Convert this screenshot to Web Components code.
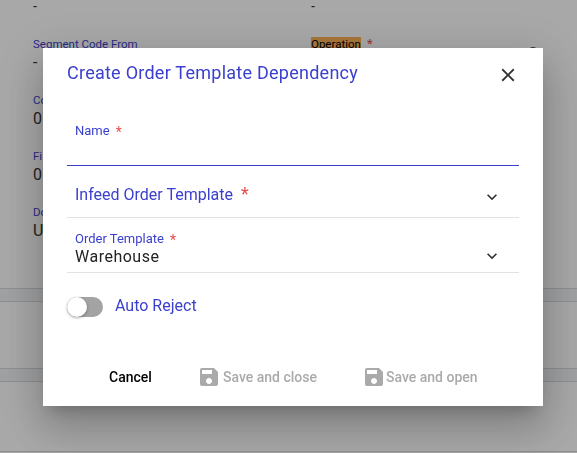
<!DOCTYPE html>
<html>
<head>
<meta charset="utf-8">
<style>
  html, body { margin: 0; padding: 0; height: 100%; overflow: hidden; font-family: Roboto, sans-serif; }
</style>
</head>
<body>
<order-page>
  <detail-field slot="left" label="-" plain></detail-field>
  <detail-field slot="right" label="-" plain></detail-field>
  <detail-field slot="left" label="Segment Code From" value="-"></detail-field>
  <detail-field slot="right" label="Operation" marked></detail-field>
  <detail-field slot="left" label="Co" value="0"></detail-field>
  <detail-field slot="left" label="Fi" value="0"></detail-field>
  <detail-field slot="left" label="Do" value="U"></detail-field>
</order-page>
<modal-dialog heading="Create Order Template Dependency">
  <text-field label="Name"></text-field>
  <select-field label="Infeed Order Template" big></select-field>
  <select-field label="Order Template" value="Warehouse"></select-field>
  <toggle-field label="Auto Reject"></toggle-field>
  <action-button slot="actions" label="Cancel" style="width:93px"></action-button>
  <action-button slot="actions" label="Save and close" icon disabled style="margin-left:20px"></action-button>
  <action-button slot="actions" label="Save and open" icon disabled tight style="margin-left:45px"></action-button>
</modal-dialog>

<script>
(function () {
  const BLUE = '#3a3fce';
  const RED = '#e84c4c';
  const saveIcon = `<svg width="24" height="24" viewBox="0 0 24 24" fill="currentColor"><path d="M17 3H5c-1.11 0-2 .9-2 2v14c0 1.1.89 2 2 2h14c1.1 0 2-.9 2-2V7l-4-4zm-5 16c-1.66 0-3-1.34-3-3s1.34-3 3-3 3 1.34 3 3-1.34 3-3 3zm3-10H5V5h10v4z"/></svg>`;
  const chevron = `<svg width="20" height="20" viewBox="0 0 24 24" fill="#333"><path d="M7.41 8.59 12 13.17l4.59-4.58L18 10l-6 6-6-6z"/></svg>`;

  class OrderPage extends HTMLElement {
    constructor() {
      super();
      this.attachShadow({ mode: 'open' }).innerHTML = `
      <style>
        :host { display: block; position: relative; height: 453px; background: #fff; color: #333; overflow: hidden; }
        .cols { display: grid; grid-template-columns: 278px 1fr; padding: 0 0 0 33px; height: 288px; box-sizing: border-box; }
        .col { display: flex; flex-direction: column; gap: 18px; }
        .band { height: 12px; background: #f2f4f7; border-top: 1px solid #d8d8d8; border-bottom: 1px solid #d8d8d8; }
        .gap { height: 66px; }
        .end { height: 69px; border-bottom: 1px solid #d8d8d8; }
        .peek { position: absolute; left: 527px; top: 47px; width: 12px; height: 12px; border-radius: 50%; background: #444; }
      </style>
      <div class="cols">
        <div class="col"><slot name="left"></slot></div>
        <div class="col"><slot name="right"></slot></div>
      </div>
      <div class="band"></div>
      <div class="gap"></div>
      <div class="band"></div>
      <div class="end"></div>
      <div class="peek"></div>`;
    }
  }
  customElements.define('order-page', OrderPage);

  class DetailField extends HTMLElement {
    constructor() {
      super();
      this.attachShadow({ mode: 'open' });
    }
    connectedCallback() {
      const label = this.getAttribute('label');
      const value = this.getAttribute('value');
      if (this.hasAttribute('plain')) {
        this.shadowRoot.innerHTML = `
        <style>
          :host { display: block; height: 20px; }
          div { font-size: 12px; font-weight: 500; line-height: 14px; color: #333; }
        </style><div>${label}</div>`;
        return;
      }
      const name = this.hasAttribute('marked')
        ? `<span class="mark">${label}</span><span class="req">*</span>`
        : label;
      this.shadowRoot.innerHTML = `
      <style>
        :host { display: block; height: 38px; }
        .label { font-size: 11.5px; line-height: 12px; margin-bottom: 2px; color: ${BLUE}; white-space: nowrap; }
        .mark { background: #ffb45a; color: #000; }
        .req { color: ${RED}; margin-left: 6px; font-size: 13px; }
        .value { font-size: 16px; line-height: 22px; color: #333; letter-spacing: .3px; }
      </style>
      <div class="label">${name}</div>
      ${value ? `<div class="value">${value}</div>` : ''}`;
    }
  }
  customElements.define('detail-field', DetailField);

  class ModalDialog extends HTMLElement {
    constructor() {
      super();
      this.attachShadow({ mode: 'open' });
    }
    connectedCallback() {
      this.shadowRoot.innerHTML = `
      <style>
        :host { position: fixed; inset: 0; background: rgba(0,0,0,.34); }
        .box { position: absolute; left: 43px; top: 48px; width: 500px; height: 358px; box-sizing: border-box; background: #fff; padding: 0 24px; display: flex; flex-direction: column;
          box-shadow: 0 11px 15px -7px rgba(0,0,0,.2), 0 24px 38px 3px rgba(0,0,0,.14), 0 9px 46px 8px rgba(0,0,0,.12); }
        header { display: flex; justify-content: space-between; align-items: center; height: 50px; }
        h2 { margin: 0 0 2px; font-size: 18px; font-weight: 400; letter-spacing: .25px; color: ${BLUE}; }
        .close { display: flex; margin-top: 3px; }
        .body { flex: 1; }
        .actions { display: flex; align-items: center; height: 40px; margin: 0 0 9px 17px; }
      </style>
      <div class="box">
        <header>
          <h2>${this.getAttribute('heading')}</h2>
          <span class="close"><svg width="22" height="22" viewBox="0 0 24 24" fill="#333"><path d="M19 6.41 17.59 5 12 10.59 6.41 5 5 6.41 10.59 12 5 17.59 6.41 19 12 13.41 17.59 19 19 17.59 13.41 12z"/></svg></span>
        </header>
        <div class="body"><slot></slot></div>
        <div class="actions"><slot name="actions"></slot></div>
      </div>`;
    }
  }
  customElements.define('modal-dialog', ModalDialog);

  class TextField extends HTMLElement {
    constructor() {
      super();
      this.attachShadow({ mode: 'open' });
    }
    connectedCallback() {
      this.shadowRoot.innerHTML = `
      <style>
        :host { display: block; height: 68px; box-sizing: border-box; padding: 26px 8px 0; border-bottom: 1px solid #3a3fce; }
        label { display: block; font-size: 13px; line-height: 14px; color: ${BLUE}; }
        i { font-style: normal; font-size: 14px; line-height: 0; vertical-align: -2px; color: ${RED}; margin-left: 6px; }
      </style>
      <label>${this.getAttribute('label')}<i>*</i></label>`;
    }
  }
  customElements.define('text-field', TextField);

  class SelectField extends HTMLElement {
    constructor() {
      super();
      this.attachShadow({ mode: 'open' });
    }
    connectedCallback() {
      const big = this.hasAttribute('big');
      const value = this.getAttribute('value');
      this.shadowRoot.innerHTML = `
      <style>
        :host { display: flex; align-items: ${big ? 'center' : 'flex-start'}; justify-content: space-between; box-sizing: border-box; height: ${big ? 52 : 55}px; padding: ${big ? '6px' : '14px'} 17px 0 8px; border-bottom: 1px solid #e2e2e2; }
        .label { font-size: ${big ? 16 : 13}px; line-height: ${big ? 20 : 14}px; color: ${BLUE}; }
        i { font-style: normal; font-size: ${big ? 18 : 14}px; line-height: 0; vertical-align: ${big ? 0 : -2}px; color: ${RED}; margin-left: ${big ? 8 : 6}px; }
        .value { font-size: 16px; line-height: 19px; margin-top: 1px; letter-spacing: .5px; color: #222; }
        svg { display: block; margin-top: ${big ? 4 : 14}px; }
      </style>
      <div>
        <div class="label">${this.getAttribute('label')}<i>*</i></div>
        ${value ? `<div class="value">${value}</div>` : ''}
      </div>
      ${chevron}`;
    }
  }
  customElements.define('select-field', SelectField);

  class ToggleField extends HTMLElement {
    constructor() {
      super();
      this.attachShadow({ mode: 'open' });
    }
    connectedCallback() {
      this.shadowRoot.innerHTML = `
      <style>
        :host { display: flex; align-items: center; gap: 12px; margin-top: 23px; height: 22px; }
        .track { position: relative; width: 36px; height: 20px; border-radius: 10px; background: #a3a3a3; }
        .thumb { position: absolute; left: 0; top: 0; width: 20px; height: 20px; border-radius: 50%; background: #fff; box-shadow: 0 1px 3px rgba(0,0,0,.35); }
        span { font-size: 16px; color: ${BLUE}; padding-bottom: 4px; }
      </style>
      <div class="track"><div class="thumb"></div></div>
      <span>${this.getAttribute('label')}</span>`;
    }
  }
  customElements.define('toggle-field', ToggleField);

  class ActionButton extends HTMLElement {
    constructor() {
      super();
      this.attachShadow({ mode: 'open' });
    }
    connectedCallback() {
      const off = this.hasAttribute('disabled');
      this.shadowRoot.innerHTML = `
      <style>
        :host { display: inline-flex; align-items: center; justify-content: center; gap: ${this.hasAttribute('tight') ? 0 : 2}px; height: 36px; color: ${off ? '#aaa' : '#000'}; font-size: 14px; font-weight: 500; }
        svg { display: block; }
      </style>
      ${this.hasAttribute('icon') ? saveIcon : ''}<span>${this.getAttribute('label')}</span>`;
    }
  }
  customElements.define('action-button', ActionButton);
})();
</script>
</body>
</html>
